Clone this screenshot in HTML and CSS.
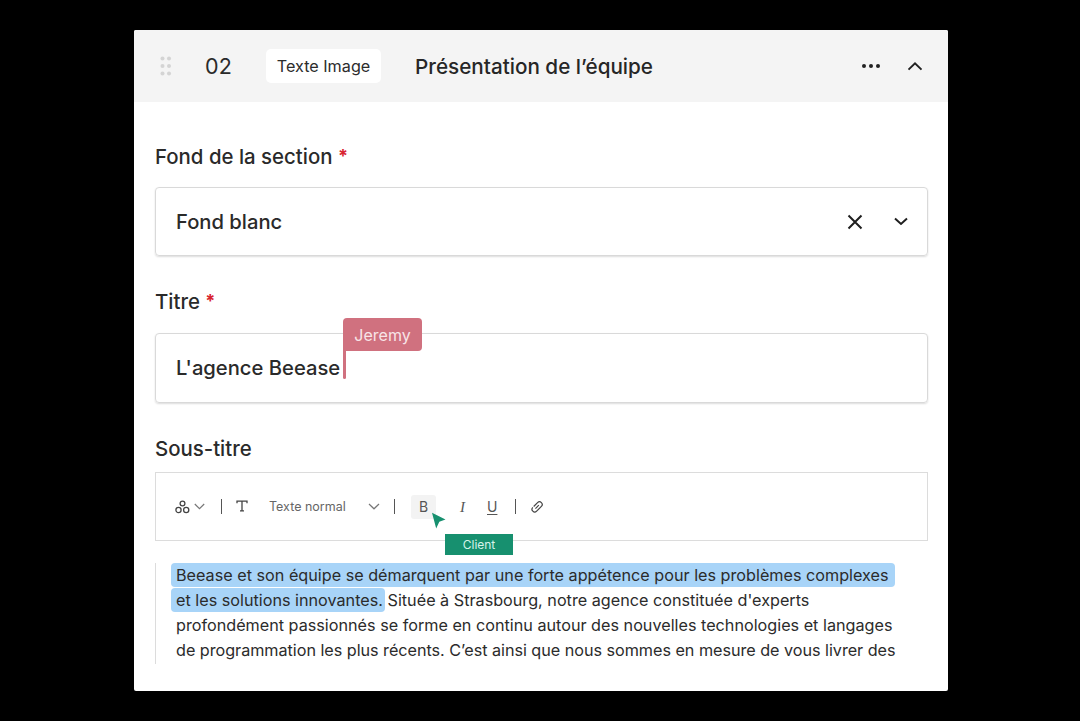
FILE: index.html
```html
<!DOCTYPE html>
<html lang="fr">
<head>
<meta charset="utf-8">
<title>Présentation de l’équipe</title>
<link rel="stylesheet" href="styles.css">
</head>
<body>
<main class="card">
  <header class="head">
    <svg class="grip" width="12" height="20" viewBox="0 0 12 20"><g fill="#d4d4d4"><circle cx="2.5" cy="2.500" r="2"/><circle cx="9" cy="2.500" r="2"/><circle cx="2.500" cy="10" r="2"/><circle cx="9" cy="10" r="2"/><circle cx="2.500" cy="17.500" r="2"/><circle cx="9" cy="17.500" r="2"/></g></svg>
    <span class="num">02</span>
    <span class="tag">Texte Image</span>
    <h1 class="title">Présentation de l’équipe</h1>
    <svg class="dots" width="20" height="6" viewBox="0 0 20 6"><g fill="#222"><circle cx="3" cy="3" r="2"/><circle cx="10" cy="3" r="2"/><circle cx="17" cy="3" r="2"/></g></svg>
    <svg class="up" width="16" height="10" viewBox="0 0 16 10"><path d="M1.500 8.600 8 2.400l6.500 6.200" fill="none" stroke="#222" stroke-width="2"/></svg>
  </header>
  <section class="body">
    <label class="label first">Fond de la section <span class="req">*</span></label>
    <div class="field">
      <span class="value">Fond blanc</span>
      <svg class="x" width="18" height="18" viewBox="0 0 18 18"><path d="M2.500 2.500l13 13M15.500 2.500l-13 13" fill="none" stroke="#1f1f1f" stroke-width="2"/></svg>
      <svg class="down" width="14" height="9" viewBox="0 0 14 9"><path d="M1 1.600 7 7l6-5.400" fill="none" stroke="#1f1f1f" stroke-width="2"/></svg>
    </div>
    <label class="label">Titre <span class="req">*</span></label>
    <div class="field tall">
      <span class="value">L'agence Beease</span>
      <div class="caret"><span class="flag">Jeremy</span></div>
    </div>
    <label class="label">Sous-titre</label>
    <div class="toolbar">
      <svg class="t-shapes" width="15" height="14" viewBox="0 0 15 14"><g fill="none" stroke="#444" stroke-width="1.300"><circle cx="7.500" cy="3.500" r="2.400"/><circle cx="3.500" cy="10" r="2.600"/><circle cx="11.200" cy="10" r="2.600"/></g></svg>
      <svg class="t-chev1" width="11" height="7" viewBox="0 0 11 7"><path d="M.8 1l4.700 4.600L10.200 1" fill="none" stroke="#777" stroke-width="1.200"/></svg>
      <i class="sep s1"></i>
      <svg class="t-t" width="12" height="12" viewBox="0 0 12 12"><path d="M1 3.200V1.200h10v2M6 1.200v9.600M4 10.800h4" fill="none" stroke="#444" stroke-width="1.300"/></svg>
      <span class="t-style">Texte normal</span>
      <svg class="t-chev2" width="12" height="7" viewBox="0 0 12 7"><path d="M1 1l5 4.800L11 1" fill="none" stroke="#777" stroke-width="1.200"/></svg>
      <i class="sep s2"></i>
      <span class="t-b">B</span>
      <span class="t-i">I</span>
      <span class="t-u">U</span>
      <i class="sep s3"></i>
      <svg class="t-link" width="14" height="14" viewBox="0 0 14 14"><g transform="rotate(-45 7 7)" fill="none" stroke="#444" stroke-width="1.200"><path d="M5 4.300h5.500a2.700 2.700 0 0 1 0 5.400H3.800a2.700 2.700 0 0 1 0-5.400"/><path d="M4.800 7h4.800"/></g></svg>
      <div class="client">
        <svg class="arrow" width="15" height="17" viewBox="0 0 15 17"><path d="M1 .8 14.500 7.500 8.300 9.700 5.200 16.500z" fill="#17906f"/></svg>
        <span class="client-tag">Client</span>
      </div>
    </div>
    <div class="text">
      <p class="line"><span class="hl">Beease et son équipe se démarquent par une forte appétence pour les problèmes complexes</span></p>
      <p class="line"><span class="hl short">et les solutions innovantes.</span> Située à Strasbourg, notre agence constituée d'experts</p>
      <p class="line">profondément passionnés se forme en continu autour des nouvelles technologies et langages</p>
      <p class="line tight">de programmation les plus récents. C’est ainsi que nous sommes en mesure de vous livrer des</p>
    </div>
  </section>
</main>
</body>
</html>
```
FILE: styles.css
```css
* { box-sizing: border-box; }
html, body { margin: 0; height: 721px; overflow: hidden; background: #000; }
body { font-family: Inter, "Liberation Sans", sans-serif; color: #232323; padding: 30px 0 0 134px; }
.card { width: 814px; height: 661px; background: #fff; border-radius: 2px; overflow: hidden; }
.head { height: 72px; background: #f4f4f4; display: flex; align-items: center; padding: 0 25px 0 26px; }
.grip { flex: none; margin-right: 33px; }
.num { font-size: 21.500px; width: 61px; letter-spacing: .3px; color: #2a2a2a; }
.tag { background: #fff; border-radius: 5px; width: 115px; height: 34px; display: flex; align-items: center; justify-content: center; font-size: 16.200px; color: #2c2c2c; margin-right: 34px; }
.title { font-size: 20.700px; font-weight: 500; margin: 0; flex: 1; color: #262626; }
.dots { margin-right: 26px; }
.body { padding: 0 20px 0 21px; }
.label { display: block; font-size: 20.400px; font-weight: 500; color: #2a2a2a; height: 24px; line-height: 24px; margin-top: 34px; }
.label.first { margin-top: 43px; }
.label + .field { margin-top: 18px; }
.label + .field.tall { margin-top: 19px; }
.req { color: #d8232f; font-size: 18px; font-weight: 700; position: relative; top: -2px; }
.field { position: relative; height: 69px; border: 1px solid #d9d9d9; border-radius: 4px; box-shadow: 0 1px 2px rgba(0,0,0,.14); display: flex; align-items: center; padding: 0 19px 0 20px; }
.field.tall { height: 70px; padding-bottom: 2px; }
.value { font-size: 20.200px; font-weight: 500; flex: 1; color: #2a2a2a; }
.x { margin-right: 30px; }
.caret { position: absolute; left: 187px; top: 17px; width: 3px; height: 28px; background: #d0717f; border-radius: 0 0 2px 2px; }
.flag { position: absolute; left: 0; bottom: 28px; width: 79px; height: 33px; background: #d0717f; color: #f8e4e7; border-radius: 4px 4px 4px 0; font-size: 16px; display: flex; align-items: center; justify-content: center; }
.toolbar { position: relative; height: 69px; border: 1px solid #dcdcdc; margin-top: 11px; }
.toolbar > * { position: absolute; }
.t-shapes { left: 19px; top: 27px; }
.t-chev1 { left: 38px; top: 30px; }
.sep { width: 1px; height: 15px; background: #555; top: 26px; }
.s1 { left: 65px; } .s2 { left: 238px; } .s3 { left: 359px; }
.t-t { left: 80px; top: 27px; }
.t-style { left: 113px; top: 25px; font-size: 12.500px; color: #666; line-height: 17px; }
.t-chev2 { left: 212px; top: 30px; }
.t-b { left: 255px; top: 22px; width: 25px; height: 24px; background: #f3f3f3; border-radius: 3px; text-align: center; font-size: 14px; line-height: 24px; color: #555; }
.t-i { left: 304px; top: 25px; font-family: "Liberation Serif", serif; font-style: italic; font-size: 15px; line-height: 18px; color: #555; }
.t-u { left: 331px; top: 25px; font-size: 14px; line-height: 17px; color: #555; text-decoration: underline; text-underline-offset: 2px; }
.t-link { left: 374px; top: 27px; }
.client { left: 0; top: 0; width: 0; height: 0; }
.arrow { position: absolute; left: 275px; top: 39px; }
.client-tag { position: absolute; left: 289px; top: 61px; width: 68px; height: 21px; background: #17906f; color: #d6f3ea; font-size: 12px; display: flex; align-items: center; justify-content: center; }
.text { margin-top: 22px; height: 101px; border-left: 1px solid #dcdcdc; padding: 0 0 0 20px; font-size: 16.200px; color: #2b2b2b; }
.line { margin: 0; height: 25px; line-height: 25px; white-space: nowrap; }
.line.tight { letter-spacing: -.03px; }
.hl { background: #a8d4f8; border-radius: 4px; padding: 2px 6px 2px 5px; margin: 0 -6px 0 -5px; }
.hl.short { padding-right: 2px; margin-right: -2px; }
```
